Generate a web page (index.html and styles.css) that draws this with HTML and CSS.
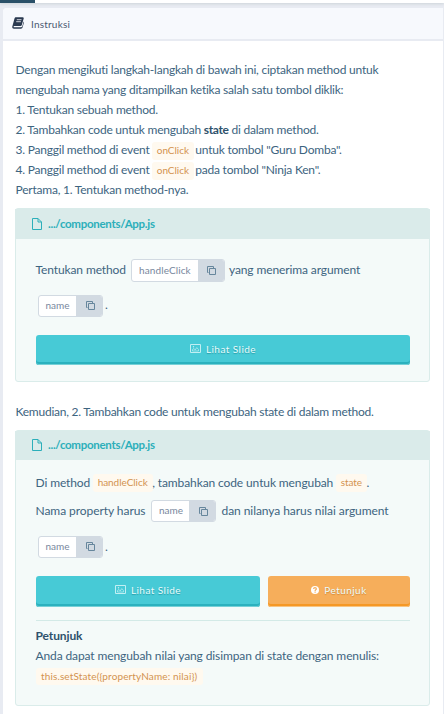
FILE: index.html
```html
<!DOCTYPE html>
<html lang="id">
<head>
<meta charset="utf-8">
<title>Instruksi</title>
<link rel="stylesheet" href="styles.css">
</head>
<body>
<svg class="symbols" width="0" height="0" aria-hidden="true">
  <symbol id="copy" viewBox="0 0 10 9"><path d="M2.500 6.500h-1v-6h6v2M3.500 2.500h6v6h-6z" fill="none" stroke="currentColor"/></symbol>
  <symbol id="file" viewBox="0 0 10 12"><path d="M.5.5H6L9.5 4v7.5h-9zM6 .5V4h3.5" fill="none" stroke="currentColor"/></symbol>
  <symbol id="image" viewBox="0 0 11 9"><path d="M.5.5h10v8H.5z" fill="none" stroke="currentColor"/><path d="M2.5 7V5.500L4 4.500 5.200 6 6.800 3.600 8.500 5.500V7z" fill="none" stroke="currentColor" stroke-width=".7"/><circle cx="3.500" cy="2.800" r=".7" fill="currentColor"/></symbol>
</svg>
<div class="topbar"><div class="tab"></div></div>
<section class="panel">
  <header class="panel-head">
    <svg class="book" viewBox="0 0 12 12"><path d="M4 .3h6.700c.8 0 1.200.5 1 1.200L9.800 8c-.2.7-.6 1-1.300 1H2.200c-.8 0-.8 1.300 0 1.300h6.900c.6 0 .9-.2 1.100-.8l1.500-5c.4.3.4.7.3 1.100l-1.500 5c-.2.7-.7 1.200-1.500 1.200H1.900C.6 11.800 0 10.600.3 9.500L2.500 1.600C2.700.8 3.200.3 4 .3z" fill="currentColor"/><path d="M4.800 2.700h4.700M4.200 4.700h4.700" stroke="#f7f9fd" stroke-width=".8"/></svg>
    <span>Instruksi</span>
  </header>
  <main class="content">
    <div class="intro">
      <p>Dengan mengikuti langkah-langkah di bawah ini, ciptakan method untuk</p>
      <p>mengubah nama yang ditampilkan ketika salah satu tombol diklik:</p>
      <p>1. Tentukan sebuah method.</p>
      <p>2. Tambahkan code untuk mengubah <b>state</b> di dalam method.</p>
      <p>3. Panggil method di event <code>onClick</code> untuk tombol "Guru Domba".</p>
      <p>4. Panggil method di event <code>onClick</code> pada tombol "Ninja Ken".</p>
      <p>Pertama, 1. Tentukan method-nya.</p>
    </div>
    <article class="card first">
      <h2><svg class="file"><use href="#file"/></svg>.../components/App.js</h2>
      <div class="body">
        <div class="row"><span>Tentukan method</span><span class="chip long"><span>handleClick</span><i><svg><use href="#copy"/></svg></i></span><span>yang menerima argument</span></div>
        <div class="row next"><span class="chip"><span>name</span><i><svg><use href="#copy"/></svg></i></span><span>.</span></div>
        <div class="buttons"><div class="btn"><svg class="image"><use href="#image"/></svg>Lihat Slide</div></div>
      </div>
    </article>
    <p class="between">Kemudian, 2. Tambahkan code untuk mengubah state di dalam method.</p>
    <article class="card second">
      <h2><svg class="file"><use href="#file"/></svg>.../components/App.js</h2>
      <div class="body">
        <p class="line">Di method <code>handleClick</code>, tambahkan code untuk mengubah <code>state</code>.</p>
        <div class="row property"><span>Nama property harus</span><span class="chip"><span>name</span><i><svg><use href="#copy"/></svg></i></span><span>dan nilanya harus nilai argument</span></div>
        <div class="row next"><span class="chip"><span>name</span><i><svg><use href="#copy"/></svg></i></span><span>.</span></div>
        <div class="buttons">
          <div class="btn"><svg class="image"><use href="#image"/></svg>Lihat Slide</div>
          <div class="btn orange"><svg class="help" viewBox="0 0 8 8"><circle cx="4" cy="4" r="4" fill="#fff"/><path d="M2.600 3C2.700 1.200 5.400 1.300 5.300 2.900C5.300 3.800 4.100 3.800 4.100 4.900M4.100 5.600v1.200" fill="none" stroke="#f6ae5b" stroke-width="1.200"/></svg>Petunjuk</div>
        </div>
        <div class="hint"><p><b>Petunjuk</b></p><p>Anda dapat mengubah nilai yang disimpan di state dengan menulis:</p><code class="formula">this.setState({propertyName: nilai})</code></div>
      </div>
    </article>
  </main>
</section>
</body>
</html>
```
FILE: styles.css
```css
* { box-sizing: border-box; }
body { margin: 0; height: 714px; overflow: hidden; background: #e8ebf2; color: #3d6480; font: 12px/20px Lato, sans-serif; letter-spacing: -.22px; font-variant-ligatures: none; white-space: nowrap; }
p, h2 { margin: 0; }
svg { display: block; flex: none; }
.symbols { position: absolute; }
b { color: #2e526c; }
.intro b { letter-spacing: -.35px; }
.topbar { height: 3px; background: #fff; box-shadow: 0 1px 3px #cdd3d8; }
.tab { width: 35px; height: 3px; background: #2a5068; }
.panel { margin: 5px 0 0 3px; height: 706px; background: #fff; border-radius: 4px 0 0 0; border-right: 1px solid #e8ebf2; }
.panel-head { height: 33px; display: flex; align-items: center; gap: 7px; padding-left: 9px; border-bottom: 2px solid #e8ebf2; background: #f7f9fd; border-radius: 4px 0 0 0; font-size: 10px; letter-spacing: .2px; color: #4b5870; }
.book { width: 12px; height: 12px; color: #2b3a50; margin-top: -2px; }
.content { padding: 19px 13px 0 12px; }
.intro { padding-left: .5px; height: 148px; }
code { display: inline-block; height: 18px; padding: 0 5px; margin: 2px -.5px 0 -.5px; border-radius: 3px; background: #fff9ef; color: #d3934f; font: 10px/17px Lato, sans-serif; letter-spacing: -.05px; vertical-align: top; }
.intro code { margin-right: -1.5px; }
.line code { margin-top: 1px; margin-left: 0; }
.card { width: 415px; border: 1px solid #daecea; border-radius: 3px; background: #f4faf9; letter-spacing: -.11px; }
.first { height: 174px; }
.second { height: 276px; }
.card h2 { height: 30px; margin: 0 -1px; padding: 0 0 1px 17px; display: flex; align-items: center; gap: 6px; background: #daebea; color: #2cafba; font-size: 11.5px; line-height: 20px; letter-spacing: -.28px; }
.second h2 { height: 29px; }
.file { width: 10px; height: 12px; }
.body { padding: 0 19px 0 20px; }
.first .body { padding-top: 20px; }
.second .body { padding-top: 13px; }
.row { height: 23px; display: flex; align-items: center; gap: 5px; }
.row > span:not(.chip) { margin-top: -2px; }
.row > span:first-child:not(.chip), .line, .hint p { text-indent: -.5px; }
.property { letter-spacing: -.06px; }
.property span + .chip { margin-left: 1px; }
.first .row:not(.next) > span:last-child { margin-left: -1px; }
.row.next { margin-top: 13px; padding-left: 2px; gap: 2px; }
.first .row.next { margin-top: 12px; }
.chip { display: flex; width: 65px; height: 22px; border: 1px solid #d2dae2; border-radius: 3px; background: #fff; color: #78879d; font-size: 10px; letter-spacing: 0; line-height: 19px; overflow: hidden; }
.second .row:not(.next) .chip { margin-top: -1px; }
.second .row.next .chip { margin-top: -2px; }
.chip > span { flex: 1; text-align: center; text-indent: -1px; }
.chip i { width: 27px; margin: -1px; height: 22px; padding-top: 1px; background: #d2dae2; border-bottom: 1px solid #909eb1; display: flex; align-items: center; justify-content: center; color: #66869c; }
.chip svg { width: 10px; height: 9px; }
.chip.long { width: 94px; height: 23px; letter-spacing: .1px; line-height: 21px; }
.long i { height: 23px; }
.buttons { display: flex; gap: 8px; margin-top: 18px; }
.second .buttons { margin-top: 17px; }
.btn { flex: 1; height: 30px; padding-bottom: 3px; display: flex; align-items: center; justify-content: center; gap: 5px; border-radius: 3px; background: #47cad6; box-shadow: inset 0 -1px #76d0d7, inset 0 -3px #2bb1be; color: #eafcfd; font-size: 10px; letter-spacing: .45px; text-shadow: 0 1px 1px #279ba6; }
.second .btn { height: 31px; padding-bottom: 4px; }
.second .btn.orange { flex: 0 0 142px; background: #f6ae5b; box-shadow: inset 0 -1px #f7c483, inset 0 -3px #f59825; text-shadow: 0 1px 1px #d28739; }
.image { width: 11px; height: 9px; opacity: .75; }
.help { width: 8px; height: 8px; }
.between { height: 48px; padding: 20px 0 0 .5px; letter-spacing: -.24px; }
.line { height: 27px; }
.hint { margin: 13px 0 0; padding-top: 5px; border-top: 1px solid #d3eae7; }
.hint .formula { display: block; width: 167px; margin: 2px 0 0; height: 17px; letter-spacing: .13px; }
```
